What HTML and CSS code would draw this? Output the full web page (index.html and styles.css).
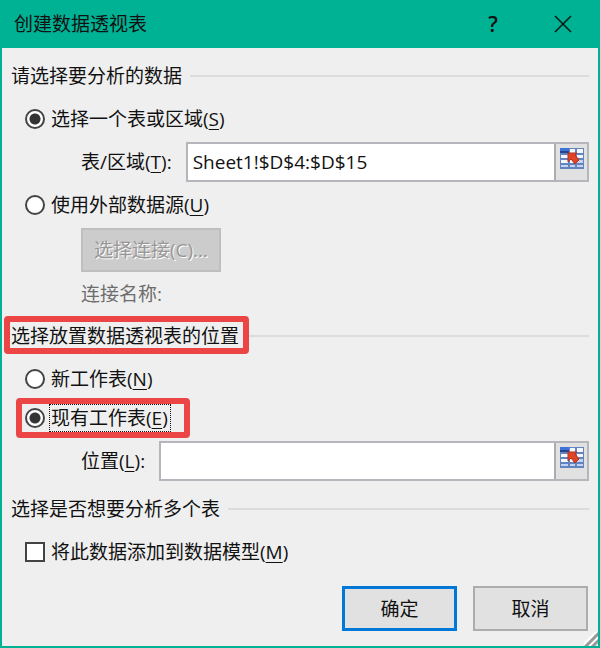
FILE: index.html
```
<!DOCTYPE html>
<html lang="zh-CN">
<head>
  <meta charset="UTF-8">
  <title>创建数据透视表</title>
  <meta name="viewport" content="width=device-width, initial-scale=1.0">
  <link rel="stylesheet" href="styles.css">
</head>
<body>

  <svg class="hidden">
    <symbol id="picker" viewBox="0 0 24 21">
      <rect x="0" y="0" width="24" height="21" fill="#6484c0"/>
      <path fill="#f4f8fe" d="M10 1h5v4h-5zM17 1h6v4h-6zM1 7h7v3H1zM10 7h5v3h-5zM17 7h6v3h-6zM1 12h7v3H1zM10 12h5v3h-5z"/>
      <path fill="#c3d3f0" d="M17 12h6v3h-6zM1 17h7v2H1zM10 17h5v2h-5zM17 17h6v2h-6z"/>
      <path fill="#3f73d8" d="M0 0h9v3H0z"/>
      <path fill="#24448c" d="M0 3h9v2H0z"/>
      <path fill="#e04426" stroke="#b5301e" stroke-linejoin="round" d="M8 5H17L15 7L19 12L15 16L11 11L8 14Z"/>
    </symbol>
  </svg>

  <form class="dialog">
    <header class="titlebar">
      <h1>创建数据透视表</h1>
      <button type="button" class="help" aria-label="帮助">?</button>
      <button type="button" class="close" aria-label="关闭">
        <svg width="18" height="18" viewBox="0 0 18 18"><path d="M1 1l16 16M17 1L1 17" stroke="#0a1a17" stroke-width="1.6" fill="none"/></svg>
      </button>
    </header>

    <main class="content">
      <section>
        <h2><span>请选择要分析的数据</span></h2>
        <div class="option">
          <input type="radio" name="source" id="range" checked>
          <label for="range">选择一个表或区域(<u>S</u>)</label>
        </div>
        <div class="field">
          <label for="rangeInput">表/区域(<u>T</u>):</label>
          <div class="ref">
            <input type="text" id="rangeInput" value="Sheet1!$D$4:$D$15">
            <button type="button" aria-label="选择区域"><svg width="24" height="21"><use href="#picker"/></svg></button>
          </div>
        </div>
        <div class="option">
          <input type="radio" name="source" id="external">
          <label for="external">使用外部数据源(<u>U</u>)</label>
        </div>
        <button type="button" class="connect" disabled>选择连接(C)...</button>
        <p class="connection">连接名称:</p>
      </section>

      <section>
        <h2><span class="mark">选择放置数据透视表的位置</span></h2>
        <div class="option">
          <input type="radio" name="place" id="newSheet">
          <label for="newSheet">新工作表(<u>N</u>)</label>
        </div>
        <div class="option mark focused">
          <input type="radio" name="place" id="existing" checked>
          <label for="existing">现有工作表(<u>E</u>)</label>
        </div>
        <div class="field">
          <label for="placeInput">位置(<u>L</u>):</label>
          <div class="ref">
            <input type="text" id="placeInput">
            <button type="button" aria-label="选择位置"><svg width="24" height="21"><use href="#picker"/></svg></button>
          </div>
        </div>
      </section>

      <section>
        <h2><span>选择是否想要分析多个表</span></h2>
        <div class="option">
          <input type="checkbox" id="model">
          <label for="model">将此数据添加到数据模型(<u>M</u>)</label>
        </div>
      </section>
    </main>

    <footer class="actions">
      <button type="submit" class="primary">确定</button>
      <button type="button">取消</button>
    </footer>

    <svg class="grip" width="14" height="14" viewBox="0 0 14 14"><path d="M0 14L14 0M6 15L15 6" stroke="#fff" stroke-width="5"/><path d="M1 15L15 1M8 15L15 8" stroke="#999" stroke-width="3"/></svg>
  </form>

</body>
</html>
```
FILE: styles.css
```
* {
  box-sizing: border-box;
}
body {
  margin: 0;
}
body, input, button {
  font-family: "Open Sans", "Noto Sans CJK SC", sans-serif;
  font-size: 19px;
  line-height: 28px;
  color: #111;
}
h1, h2, p {
  margin: 0;
  font-size: 19px;
  font-weight: normal;
}
.hidden {
  display: none;
}
.dialog {
  position: relative;
  min-height: 100vh;
  background: #efefef;
  border: 2px solid #00b294;
  border-top: 0;
}
.titlebar {
  display: flex;
  align-items: center;
  height: 48px;
  padding: 0 20px 0 12px;
  background: #00b294;
}
.titlebar h1 {
  flex: 1;
}
.titlebar button {
  display: flex;
  justify-content: center;
  align-items: center;
  width: 30px;
  height: 30px;
  padding: 0;
  border: 0;
  background: none;
}
.titlebar .help {
  margin-right: 40px;
  font-size: 21px;
  font-weight: 600;
}
.content {
  padding: 14px 9px 0;
}
section {
  margin-bottom: 14px;
}
h2 {
  display: flex;
  align-items: center;
  gap: 8px;
  margin-bottom: 15px;
}
h2::after {
  content: "";
  flex: 1;
  height: 2px;
  background: #dcdcdc;
}
.option {
  display: flex;
  align-items: center;
  gap: 6px;
  width: fit-content;
  margin: 0 0 9px 14px;
}
.option + .option {
  margin-top: 11px;
}
.option input {
  appearance: none;
  width: 20px;
  height: 20px;
  margin: 0;
  background: #fff;
  border: 2px solid #444;
}
.option input[type="radio"] {
  border-radius: 50%;
}
.option input[type="radio"]:checked {
  background: radial-gradient(circle, #333 5px, #fff 6px);
}
u {
  text-underline-offset: 3px;
  text-decoration-thickness: 1px;
}
.field {
  display: flex;
  align-items: center;
  gap: 14px;
  margin: 0 0 9px 70px;
}
.ref {
  flex: 1;
  display: flex;
  height: 40px;
  border: 2px solid #b4b6bb;
  background: #fff;
}
.ref input {
  flex: 1;
  min-width: 0;
  padding: 0 5px;
  border: 0;
  background: none;
}
.ref button {
  display: flex;
  justify-content: center;
  width: 33px;
  padding: 4px 0;
  border: 0;
  border-left: 2px solid #abadb3;
  background: #e1e1e1;
}
.connect {
  display: block;
  width: 140px;
  height: 44px;
  margin-left: 70px;
  padding: 0;
  border: 2px solid #bfbfbf;
  background: #ccc;
  color: #979797;
  text-shadow: 1px 1px #fff;
}
.connection {
  margin: 8px 0 0 70px;
  color: #6d6d6d;
}
/* red highlight frames */
.mark {
  position: relative;
}
.mark::before {
  content: "";
  position: absolute;
  inset: -6px -10px -4px -7px;
  border: 6px solid #eb4545;
  border-radius: 4px;
}
.option.mark::before {
  inset: -6px -22px -6px -9px;
}
.focused label {
  position: relative;
}
.focused label::after {
  content: "";
  position: absolute;
  inset: 0 -3px 0 -2px;
  border: 1px dotted #111;
}
.actions {
  display: flex;
  justify-content: flex-end;
  gap: 16px;
  padding: 6px 10px 13px;
}
.actions button {
  width: 115px;
  height: 45px;
  padding: 0;
  border: 2px solid #adadad;
  background: #e1e1e1;
}
.actions .primary {
  border: 3px solid #0078d7;
}
.grip {
  position: absolute;
  right: 0;
  bottom: 0;
}
```
